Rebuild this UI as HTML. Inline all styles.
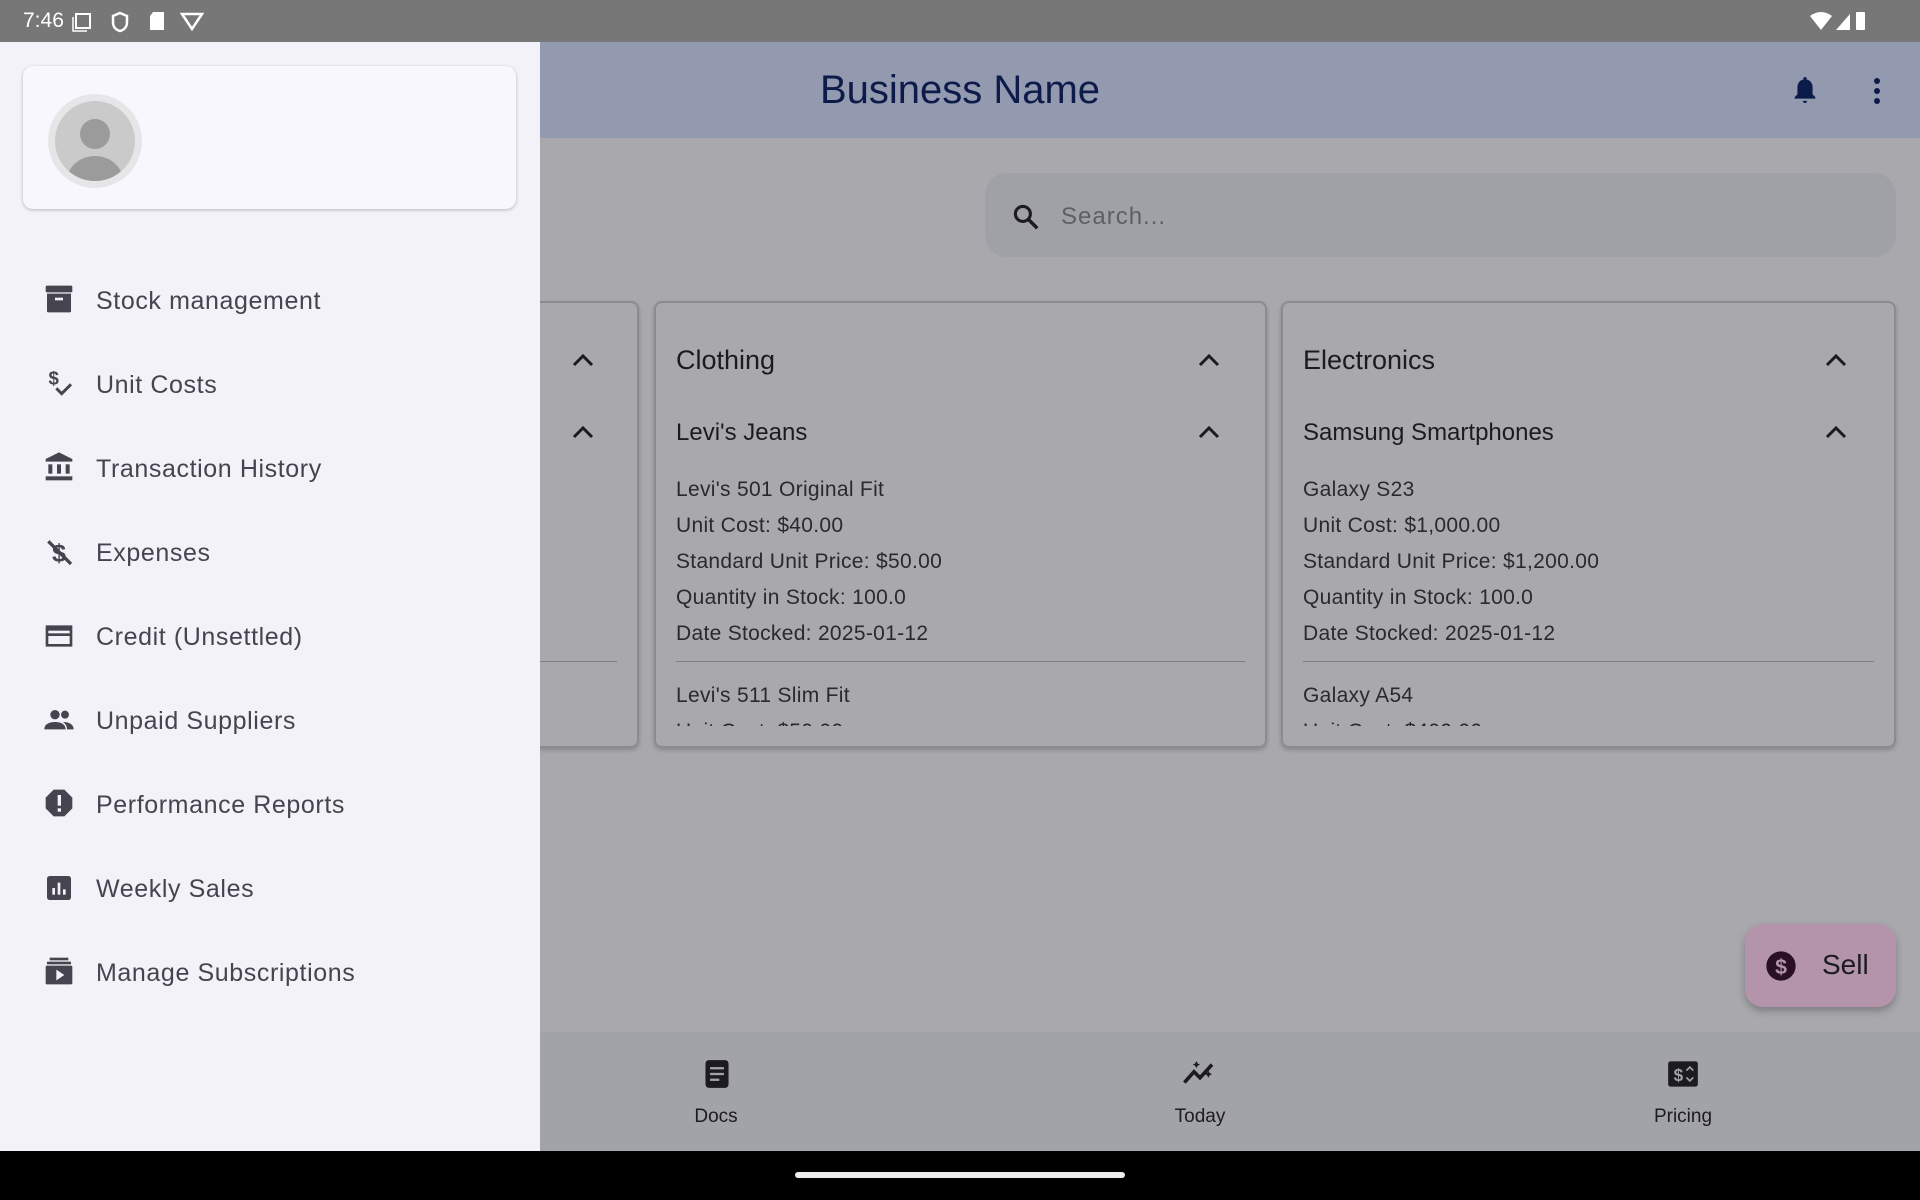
<!DOCTYPE html>
<html><head><style>
*{margin:0;padding:0;box-sizing:border-box}
body{width:1920px;height:1200px;position:relative;overflow:hidden;font-family:"Liberation Sans",sans-serif;background:#a9a8ad}
.abs{position:absolute}
.status{left:0;top:0;width:1920px;height:42px;background:#777;color:#fff;font-size:21px}
.appbar{left:540px;top:42px;width:1380px;height:96px;background:#9399ae}
.title{left:540px;width:840px;top:68px;text-align:center;font-size:40px;color:#0d1b4a}
.search{left:985px;top:173px;width:911px;height:84px;background:#a0a1a6;border-radius:22px}
.search span{position:absolute;left:76px;top:30px;font-size:24px;color:#5e5f63;letter-spacing:1px}
.card{top:301px;height:447px;border:2px solid #8c8c90;border-radius:8px;background:#a9a8ad;box-shadow:0 2px 4px rgba(0,0,0,.2);overflow:hidden}
.ct{position:absolute;font-size:27px;color:#1c1b1f}
.st{position:absolute;font-size:24px;color:#1c1b1f}
.ln{position:absolute;font-size:21px;color:#2a292e;letter-spacing:.3px}
.chev{position:absolute;width:22px;height:14px}
.nav{left:540px;top:1032px;width:1380px;height:119px;background:#a2a3a8}
.nl{position:absolute;top:1106px;font-size:19px;color:#1c1b1f;transform:translateX(-50%)}
.drawer{left:0;top:42px;width:540px;height:1109px;background:#f3f2f8}
.mi{position:absolute;left:96px;font-size:25px;color:#45444f;letter-spacing:.6px}
.ic{position:absolute;left:43px;width:32px;height:32px}
</style></head><body>
<div class="abs status"><span style="position:absolute;left:23px;top:9px">7:46</span>
<svg class="abs" style="left:72px;top:12px" width="20" height="20"><rect x="4" y="2" width="14" height="14" fill="none" stroke="#fff" stroke-width="2"/><path d="M1 5v14h14" fill="none" stroke="#fff" stroke-width="1.5"/></svg>
<svg class="abs" style="left:110px;top:11px" width="20" height="22"><path d="M10 2l7 3v6c0 5-3 8-7 9-4-1-7-4-7-9V5z" fill="none" stroke="#fff" stroke-width="2.5"/></svg>
<svg class="abs" style="left:148px;top:11px" width="18" height="20"><path d="M5 1h11v18H2V5z" fill="#fff"/></svg>
<svg class="abs" style="left:180px;top:11px" width="24" height="20"><path d="M2 3h20l-10 15z" fill="none" stroke="#fff" stroke-width="2.5"/></svg>
<svg class="abs" style="left:1808px;top:10px" width="60" height="22"><path d="M2 6q11-8 22 0l-11 14z" fill="#fff"/><path d="M28 20l14-16v16z" fill="#fff"/><rect x="48" y="2" width="9" height="18" rx="1" fill="#fff"/></svg>
</div>
<div class="abs appbar"></div>
<div class="abs title">Business Name</div>
<svg class="abs" style="left:1792px;top:74px" width="26" height="32" viewBox="0 0 24 28"><path d="M12 2c-1 0-1.5.7-1.5 1.5v.8C7 5 5 8 5 11.5V18l-2.5 2.5V22h19v-1.5L19 18v-6.5c0-3.5-2-6.5-5.5-7.2v-.8C13.5 2.7 13 2 12 2zM10 24a2 2 0 004 0z" fill="#0d1b4a"/></svg>
<svg class="abs" style="left:1868px;top:76px" width="18" height="30"><circle cx="9" cy="5" r="3" fill="#0d1b4a"/><circle cx="9" cy="15" r="3" fill="#0d1b4a"/><circle cx="9" cy="25" r="3" fill="#0d1b4a"/></svg>
<div class="abs search"><svg class="abs" style="left:26px;top:28px" width="30" height="32" viewBox="0 0 24 24"><circle cx="9.5" cy="9.5" r="6" fill="none" stroke="#1c1b1f" stroke-width="2.5"/><path d="M14 14l7 7" stroke="#1c1b1f" stroke-width="2.8"/></svg><span>Search...</span></div>

<div class="abs card" style="left:500px;width:139px">
<svg class="chev" style="left:70px;top:50px" viewBox="0 0 22 14"><path d="M2 12l9-9 9 9" fill="none" stroke="#1c1b1f" stroke-width="3"/></svg>
<svg class="chev" style="left:70px;top:122px" viewBox="0 0 22 14"><path d="M2 12l9-9 9 9" fill="none" stroke="#1c1b1f" stroke-width="3"/></svg>
<div class="abs" style="left:0;top:358px;width:115px;height:1px;background:#7f7f83"></div>
</div>

<div class="abs card" style="left:654px;width:613px">
<div class="ct" style="left:20px;top:42px">Clothing</div>
<svg class="chev" style="left:542px;top:50px" viewBox="0 0 22 14"><path d="M2 12l9-9 9 9" fill="none" stroke="#1c1b1f" stroke-width="3"/></svg>
<div class="st" style="left:20px;top:116px">Levi's Jeans</div>
<svg class="chev" style="left:542px;top:122px" viewBox="0 0 22 14"><path d="M2 12l9-9 9 9" fill="none" stroke="#1c1b1f" stroke-width="3"/></svg>
<div class="ln" style="left:20px;top:175px">Levi's 501 Original Fit</div>
<div class="ln" style="left:20px;top:211px">Unit Cost: $40.00</div>
<div class="ln" style="left:20px;top:247px">Standard Unit Price: $50.00</div>
<div class="ln" style="left:20px;top:283px">Quantity in Stock: 100.0</div>
<div class="ln" style="left:20px;top:319px">Date Stocked: 2025-01-12</div>
<div class="abs" style="left:20px;top:358px;width:569px;height:1px;background:#7f7f83"></div>
<div class="ln" style="left:20px;top:381px">Levi's 511 Slim Fit</div>
<div class="ln" style="left:20px;top:417px;clip-path:inset(0 0 75% 0)">Unit Cost: $50.00</div>
</div>

<div class="abs card" style="left:1281px;width:615px">
<div class="ct" style="left:20px;top:42px">Electronics</div>
<svg class="chev" style="left:542px;top:50px" viewBox="0 0 22 14"><path d="M2 12l9-9 9 9" fill="none" stroke="#1c1b1f" stroke-width="3"/></svg>
<div class="st" style="left:20px;top:116px">Samsung Smartphones</div>
<svg class="chev" style="left:542px;top:122px" viewBox="0 0 22 14"><path d="M2 12l9-9 9 9" fill="none" stroke="#1c1b1f" stroke-width="3"/></svg>
<div class="ln" style="left:20px;top:175px">Galaxy S23</div>
<div class="ln" style="left:20px;top:211px">Unit Cost: $1,000.00</div>
<div class="ln" style="left:20px;top:247px">Standard Unit Price: $1,200.00</div>
<div class="ln" style="left:20px;top:283px">Quantity in Stock: 100.0</div>
<div class="ln" style="left:20px;top:319px">Date Stocked: 2025-01-12</div>
<div class="abs" style="left:20px;top:358px;width:571px;height:1px;background:#7f7f83"></div>
<div class="ln" style="left:20px;top:381px">Galaxy A54</div>
<div class="ln" style="left:20px;top:417px;clip-path:inset(0 0 75% 0)">Unit Cost: $400.00</div>
</div>

<div class="abs" style="left:1745px;top:924px;width:151px;height:83px;background:#b394ab;border-radius:18px;box-shadow:0 4px 8px rgba(0,0,0,.25)">
<svg class="abs" style="left:20px;top:26px" width="32" height="32" viewBox="0 0 24 24"><circle cx="12" cy="12" r="11" fill="#2a1024"/><text x="12" y="18" text-anchor="middle" font-size="16" font-weight="bold" fill="#b394ab" font-family="Liberation Sans">$</text></svg>
<div class="abs" style="left:77px;top:25px;font-size:28px;color:#1c1b1f">Sell</div>
</div>

<div class="abs nav"></div>
<svg class="abs" style="left:703px;top:1059px" width="28" height="30" viewBox="0 0 24 26"><rect x="2" y="1" width="20" height="24" rx="3" fill="#1c1b1f"/><rect x="6" y="7" width="12" height="2" fill="#a2a3a8"/><rect x="6" y="12" width="12" height="2" fill="#a2a3a8"/><rect x="6" y="17" width="8" height="2" fill="#a2a3a8"/></svg>
<div class="nl" style="left:716px">Docs</div>
<svg class="abs" style="left:1182px;top:1058px" width="36" height="30" viewBox="0 0 30 24"><path d="M2 20l8-9 5 5 10-11" fill="none" stroke="#1c1b1f" stroke-width="3"/><path d="M12 2l1 2 2 1-2 1-1 2-1-2-2-1 2-1z M22 10l1 2 2 1-2 1-1 2-1-2-2-1 2-1z" fill="#1c1b1f"/></svg>
<div class="nl" style="left:1200px">Today</div>
<svg class="abs" style="left:1667px;top:1060px" width="32" height="28" viewBox="0 0 28 24"><rect x="1" y="1" width="26" height="22" rx="2" fill="#1c1b1f"/><text x="10" y="18" text-anchor="middle" font-size="15" font-weight="bold" fill="#a2a3a8" font-family="Liberation Sans">$</text><path d="M17 9l3-3 3 3M17 15l3 3 3-3" fill="none" stroke="#a2a3a8" stroke-width="1.5"/></svg>
<div class="nl" style="left:1683px">Pricing</div>

<div class="abs" style="left:0;top:1151px;width:1920px;height:49px;background:#000"></div>
<div class="abs" style="left:795px;top:1172px;width:330px;height:6px;border-radius:3px;background:#eee"></div>

<div class="abs drawer">
<div class="abs" style="left:23px;top:24px;width:493px;height:143px;background:#f8f7fd;border-radius:10px;box-shadow:0 1px 3px rgba(0,0,0,.25)">
<div class="abs" style="left:25px;top:28px;width:94px;height:94px;border-radius:50%;background:#e6e6e9"></div>
<div class="abs" style="left:32px;top:35px;width:80px;height:80px;border-radius:50%;background:#cacaca;overflow:hidden">
<div class="abs" style="left:25px;top:18px;width:30px;height:30px;border-radius:50%;background:#9b9b9b"></div>
<div class="abs" style="left:12px;top:55px;width:56px;height:50px;border-radius:50%;background:#9b9b9b"></div></div>
</div>
</div>
<svg class="ic" style="top:283px" viewBox="0 0 24 24"><rect x="2" y="2" width="20" height="5" rx="1" fill="#45444f"/><path d="M3 8h18v13a1 1 0 01-1 1H4a1 1 0 01-1-1z" fill="#45444f"/><rect x="9" y="11" width="6" height="2" fill="#f3f2f8"/></svg>
<div class="mi" style="top:287px">Stock management</div>
<svg class="ic" style="top:367px" viewBox="0 0 24 24"><text x="8" y="13" text-anchor="middle" font-size="14" font-weight="bold" fill="#45444f" font-family="Liberation Sans">$</text><path d="M10 16l4 4 7-7" fill="none" stroke="#45444f" stroke-width="2.2"/></svg>
<div class="mi" style="top:371px">Unit Costs</div>
<svg class="ic" style="top:451px" viewBox="0 0 24 24"><path d="M12 1l10 5v2H2V6z" fill="#45444f"/><rect x="4" y="10" width="3" height="7" fill="#45444f"/><rect x="10.5" y="10" width="3" height="7" fill="#45444f"/><rect x="17" y="10" width="3" height="7" fill="#45444f"/><rect x="2" y="19" width="20" height="3" fill="#45444f"/></svg>
<div class="mi" style="top:455px">Transaction History</div>
<svg class="ic" style="top:536px" viewBox="0 0 24 24"><text x="12" y="19" text-anchor="middle" font-size="19" font-weight="bold" fill="#45444f" font-family="Liberation Sans">$</text><path d="M4 4l17 17" stroke="#45444f" stroke-width="2.5"/></svg>
<div class="mi" style="top:539px">Expenses</div>
<svg class="ic" style="top:620px" viewBox="0 0 24 24"><path d="M2 4h20v16H2z" fill="#45444f"/><rect x="4" y="8" width="16" height="2" fill="#f3f2f8"/><rect x="4" y="12" width="16" height="6" fill="#f3f2f8"/></svg>
<div class="mi" style="top:623px">Credit (Unsettled)</div>
<svg class="ic" style="top:704px" viewBox="0 0 24 24"><circle cx="9" cy="8" r="3.5" fill="#45444f"/><circle cx="16.5" cy="8" r="3" fill="#45444f"/><path d="M1 19c0-4 4-5.5 8-5.5s8 1.5 8 5.5zM15 13.5c4 0 8 1.5 8 5.5h-5c0-2.5-1-4-3-5.5z" fill="#45444f"/></svg>
<div class="mi" style="top:707px">Unpaid Suppliers</div>
<svg class="ic" style="top:787px" viewBox="0 0 24 24"><path d="M8 2h8l6 6v8l-6 6H8l-6-6V8z" fill="#45444f"/><rect x="11" y="6" width="2.5" height="8" fill="#f3f2f8"/><rect x="11" y="16" width="2.5" height="2.5" fill="#f3f2f8"/></svg>
<div class="mi" style="top:791px">Performance Reports</div>
<svg class="ic" style="top:872px" viewBox="0 0 24 24"><rect x="3" y="3" width="18" height="18" rx="2" fill="#45444f"/><rect x="7" y="12" width="2" height="5" fill="#f3f2f8"/><rect x="11" y="8" width="2" height="9" fill="#f3f2f8"/><rect x="15" y="13" width="2" height="4" fill="#f3f2f8"/></svg>
<div class="mi" style="top:875px">Weekly Sales</div>
<svg class="ic" style="top:955px" viewBox="0 0 24 24"><rect x="5" y="2" width="14" height="2" fill="#45444f"/><rect x="3" y="5" width="18" height="2" fill="#45444f"/><rect x="2" y="8" width="20" height="14" rx="1" fill="#45444f"/><path d="M10 11v8l6-4z" fill="#f3f2f8"/></svg>
<div class="mi" style="top:959px">Manage Subscriptions</div>
</body></html>
